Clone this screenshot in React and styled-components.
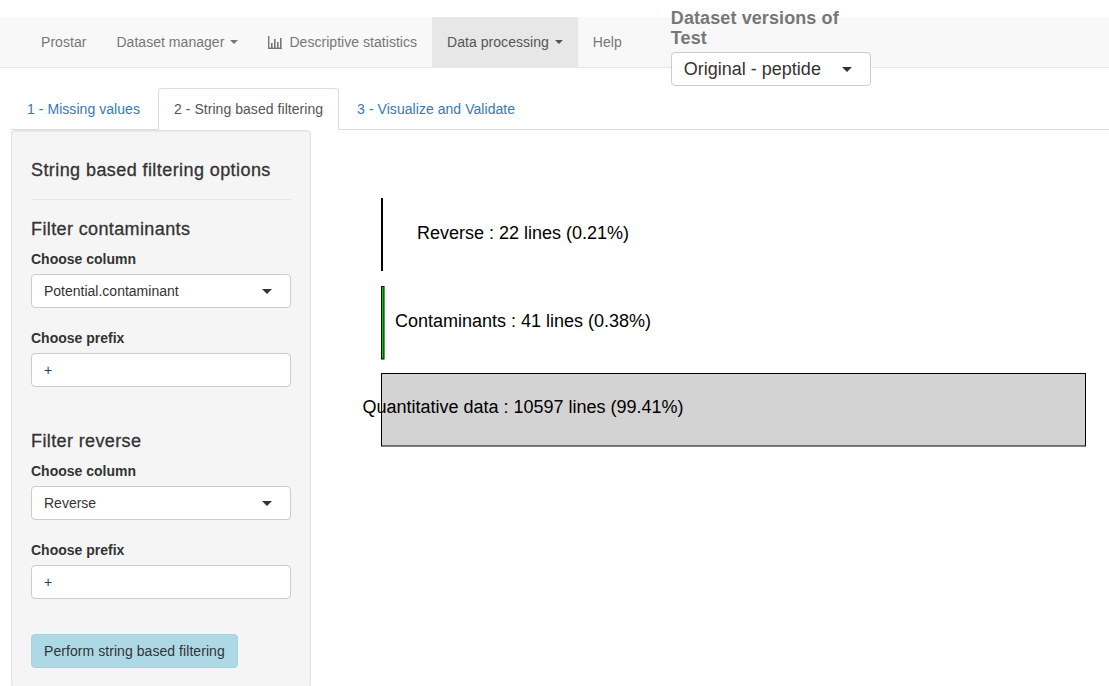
import React from "react"
import styled, { createGlobalStyle } from "styled-components"

const GlobalStyle = createGlobalStyle`
  html, body {
    margin: 0;
    padding: 0;
    background: #ffffff;
  }
  body {
    font-family: "Liberation Sans", Arial, sans-serif;
    font-size: 14px;
    line-height: 20px;
    color: #333333;
    overflow: hidden;
  }
  * {
    box-sizing: border-box;
  }
`

const StatsIcon = () => (
  <svg width="14" height="13" viewBox="0 0 14 13" style={{ marginRight: 7 }}>
    <rect x="0" y="0" width="1.4" height="13" fill="#777" />
    <rect x="0" y="11.6" width="14" height="1.4" fill="#777" />
    <rect x="3" y="7" width="1.6" height="5" fill="#777" />
    <rect x="6" y="3" width="1.6" height="9" fill="#777" />
    <rect x="9" y="6" width="1.6" height="6" fill="#777" />
    <rect x="12" y="2" width="1.6" height="10" fill="#777" />
  </svg>
)

const App = () => (
  <Page>
    <GlobalStyle />
    <Navbar>
      <NavItem>Prostar</NavItem>
      <NavItem>
        Dataset manager <Caret />
      </NavItem>
      <NavItem>
        <StatsIcon />
        Descriptive statistics
      </NavItem>
      <NavItem active>
        Data processing <Caret />
      </NavItem>
      <NavItem>Help</NavItem>
      <VersionBlock>
        <VersionLabel>Dataset versions of Test</VersionLabel>
        <VersionSelect>Original - peptide</VersionSelect>
      </VersionBlock>
    </Navbar>

    <Tabs>
      <Tab>1 - Missing values</Tab>
      <Tab active>2 - String based filtering</Tab>
      <Tab>3 - Visualize and Validate</Tab>
    </Tabs>

    <Row>
      <Sidebar>
        <PanelTitle>String based filtering options</PanelTitle>
        <Rule />
        <SectionTitle>Filter contaminants</SectionTitle>
        <Label>Choose column</Label>
        <Select>Potential.contaminant</Select>
        <Label>Choose prefix</Label>
        <Input>+</Input>

        <SectionTitle spaced>Filter reverse</SectionTitle>
        <Label>Choose column</Label>
        <Select>Reverse</Select>
        <Label>Choose prefix</Label>
        <Input>+</Input>

        <Button>Perform string based filtering</Button>
      </Sidebar>

      <Main>
        <Chart width="798" height="340">
          <rect x="70" y="68" width="2" height="73" fill="#000" />
          <text x="212" y="109.3">Reverse : 22 lines (0.21%)</text>

          <rect x="70.5" y="156.5" width="2.5" height="72.5" fill="#00cd00" stroke="#000" strokeWidth="1" />
          <text x="212" y="196.7">Contaminants : 41 lines (0.38%)</text>

          <rect x="70.5" y="243.5" width="704" height="72.5" fill="#d3d3d3" stroke="#000" strokeWidth="1" />
          <text x="212" y="283.3">Quantitative data : 10597 lines (99.41%)</text>
        </Chart>
      </Main>
    </Row>
  </Page>
)

const Page = styled.div`
  padding-top: 17px;
`

const Navbar = styled.nav`
  display: flex;
  align-items: flex-start;
  height: 51px;
  padding-left: 26px;
  background-color: #f8f8f8;
  border-bottom: 1px solid #e7e7e7;
`

const NavItem = styled.div`
  display: flex;
  align-items: center;
  height: 50px;
  padding: 0 15px;
  letter-spacing: 0.04px;
  color: ${(p) => (p.active ? "#555555" : "#777777")};
  background-color: ${(p) => (p.active ? "#e7e7e7" : "transparent")};
  white-space: nowrap;
`

const Caret = styled.span`
  display: inline-block;
  width: 0;
  height: 0;
  margin-left: 6px;
  border-top: 4px solid currentColor;
  border-left: 4px solid transparent;
  border-right: 4px solid transparent;
`

const VersionBlock = styled.div`
  width: 200px;
  margin-left: 34px;
  margin-top: -9px;
  position: relative;
  z-index: 1;
`

const VersionLabel = styled.div`
  font-size: 18px;
  font-weight: bold;
  line-height: 20px;
  letter-spacing: 0.1px;
  color: #777777;
  margin-bottom: 4px;
`

const VersionSelect = styled.div`
  position: relative;
  height: 34px;
  padding: 0 12px;
  border: 1px solid #cccccc;
  border-radius: 4px;
  background: #ffffff;
  font-size: 18px;
  line-height: 32px;
  color: #333333;

  &::after {
    content: "";
    position: absolute;
    right: 18px;
    top: 14px;
    border-top: 5px solid #333;
    border-left: 5px solid transparent;
    border-right: 5px solid transparent;
  }
`

const Tabs = styled.div`
  display: flex;
  margin: 20px 0 0 11px;
  border-bottom: 1px solid #dddddd;
  height: 42px;
`

const Tab = styled.div`
  margin-right: 2px;
  margin-bottom: -1px;
  padding: 10px 15px;
  line-height: 20px;
  letter-spacing: 0.05px;
  border: 1px solid ${(p) => (p.active ? "#dddddd" : "transparent")};
  border-bottom-color: transparent;
  border-radius: 4px 4px 0 0;
  background: ${(p) => (p.active ? "#ffffff" : "transparent")};
  color: ${(p) => (p.active ? "#555555" : "#337ab7")};
  white-space: nowrap;
`

const Row = styled.div`
  display: flex;
  padding-left: 11px;
`

const Sidebar = styled.div`
  width: 300px;
  flex-shrink: 0;
  padding: 19px;
  background-color: #f5f5f5;
  border: 1px solid #e3e3e3;
  border-radius: 4px;
  box-shadow: inset 0 1px 1px rgba(0, 0, 0, 0.05);
`

const PanelTitle = styled.h4`
  margin: 10px 0 0;
  font-size: 18px;
  font-weight: 500;
  line-height: 20px;
  letter-spacing: 0.42px;
  -webkit-text-stroke: 0.3px #333333;
  color: #333333;
`

const Rule = styled.hr`
  margin: 19px 0;
  border: 0;
  border-top: 1px solid #e5e5e5;
`

const SectionTitle = styled.h4`
  margin: ${(p) => (p.spaced ? "44px" : "0")} 0 10px;
  font-size: 18px;
  font-weight: 500;
  line-height: 20px;
  letter-spacing: 0.38px;
  -webkit-text-stroke: 0.3px #333333;
  color: #333333;
`

const Label = styled.div`
  font-weight: bold;
  margin-bottom: 5px;
`

const Field = styled.div`
  position: relative;
  height: 34px;
  padding: 0 12px;
  margin-bottom: 20px;
  background: #ffffff;
  border: 1px solid #cccccc;
  border-radius: 4px;
  line-height: 32px;
  color: #333333;
`

const Select = styled(Field)`
  &::after {
    content: "";
    position: absolute;
    right: 18px;
    top: 14px;
    border-top: 5px solid #333;
    border-left: 5px solid transparent;
    border-right: 5px solid transparent;
  }
`

const Input = styled(Field)`
  margin-bottom: 0;
  color: #2a3b5a;
`

const Button = styled.div`
  display: inline-block;
  margin-top: 35px;
  height: 34px;
  padding: 0 12px;
  line-height: 32px;
  letter-spacing: 0.06px;
  background-color: #add8e6;
  border: 1px solid #a8d2e0;
  border-radius: 4px;
  color: #333333;
`

const Main = styled.div`
  flex: 1;
`

const Chart = styled.svg`
  display: block;
  text {
    font-family: "Liberation Sans", Arial, sans-serif;
    font-size: 18px;
    text-anchor: middle;
    fill: #000;
  }
`

export default App
